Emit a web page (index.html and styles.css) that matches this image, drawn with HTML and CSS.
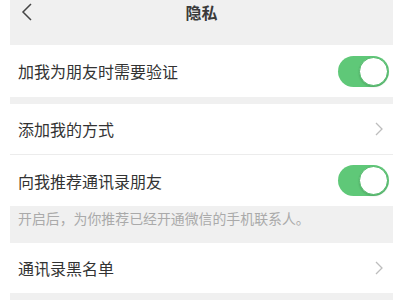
FILE: index.html
```html
<!DOCTYPE html>
<html lang="zh-CN">
<head>
  <meta charset="UTF-8" />
  <meta name="viewport" content="width=device-width, initial-scale=1.0" />
  <title>隐私</title>
  <link rel="stylesheet" href="styles.css">
</head>
<body>
  <div class="page">
    <div class="header">
      <div class="topbar">
        <svg class="back" width="12" height="18" viewBox="0 0 12 18">
          <path d="M10 1 L2 9 L10 17" fill="none" stroke="#444" stroke-width="1.5" />
        </svg>
        <span class="title">隐私</span>
      </div>
    </div>

    <div class="row first">
      <span class="label">加我为朋友时需要验证</span>
      <span class="toggle on"><span class="knob"></span></span>
    </div>

    <div class="gap"></div>

    <div class="row bordered">
      <span class="label">添加我的方式</span>
      <svg class="chevron" width="8" height="14" viewBox="0 0 8 14">
        <path d="M1 1 L7 7 L1 13" fill="none" stroke="#bdbdbd" stroke-width="1.3" />
      </svg>
    </div>
    <div class="row">
      <span class="label">向我推荐通讯录朋友</span>
      <span class="toggle on"><span class="knob"></span></span>
    </div>

    <div class="hint">开启后，为你推荐已经开通微信的手机联系人。</div>

    <div class="row last">
      <span class="label">通讯录黑名单</span>
      <svg class="chevron" width="8" height="14" viewBox="0 0 8 14">
        <path d="M1 1 L7 7 L1 13" fill="none" stroke="#bdbdbd" stroke-width="1.3" />
      </svg>
    </div>

    <div class="bottom"></div>
  </div>
</body>
</html>
```

FILE: styles.css
```css
body {
  margin: 0;
  padding: 0 7px 0 10px;
  background: #fff;
  font-family: "Noto Sans CJK SC", "Noto Sans", sans-serif;
  color: #333;
  overflow: hidden;
}

.page {
  background: #f0f0f0;
  height: 300px;
}

.header {
  height: 45px;
}

.topbar {
  position: relative;
  height: 24px;
  display: flex;
  align-items: center;
  justify-content: center;
}

.back {
  position: absolute;
  left: 11px;
  top: 3px;
}

.title {
  font-size: 16px;
  font-weight: bold;
  color: #3a3a3a;
}

.row {
  background: #fff;
  height: 51px;
  display: flex;
  align-items: center;
  justify-content: space-between;
  padding: 0 4px 0 8px;
}

.row.first {
  height: 52px;
}

.row.last {
  height: 50px;
}

.row.bordered {
  border-bottom: 1px solid #ececec;
  height: 50px;
}

.label {
  font-size: 16px;
  color: #333;
}

.gap {
  height: 7px;
}

.hint {
  height: 37px;
  box-sizing: border-box;
  padding: 0 8px;
  font-size: 13.9px;
  line-height: 24px;
  color: #aaa;
}

.chevron {
  margin-right: 6px;
}

.toggle {
  width: 51px;
  height: 31px;
  border-radius: 16px;
  background: #e5e5e5;
  position: relative;
  box-sizing: border-box;
}

.toggle.on {
  background: #5fc878;
}

.knob {
  position: absolute;
  top: 1px;
  right: 1px;
  width: 29px;
  height: 29px;
  box-sizing: border-box;
  border-radius: 50%;
  background: #fff;
  border: 1.5px solid #4fb868;
  box-shadow: 0 1px 2px rgba(0, 0, 0, 0.15);
}
```
